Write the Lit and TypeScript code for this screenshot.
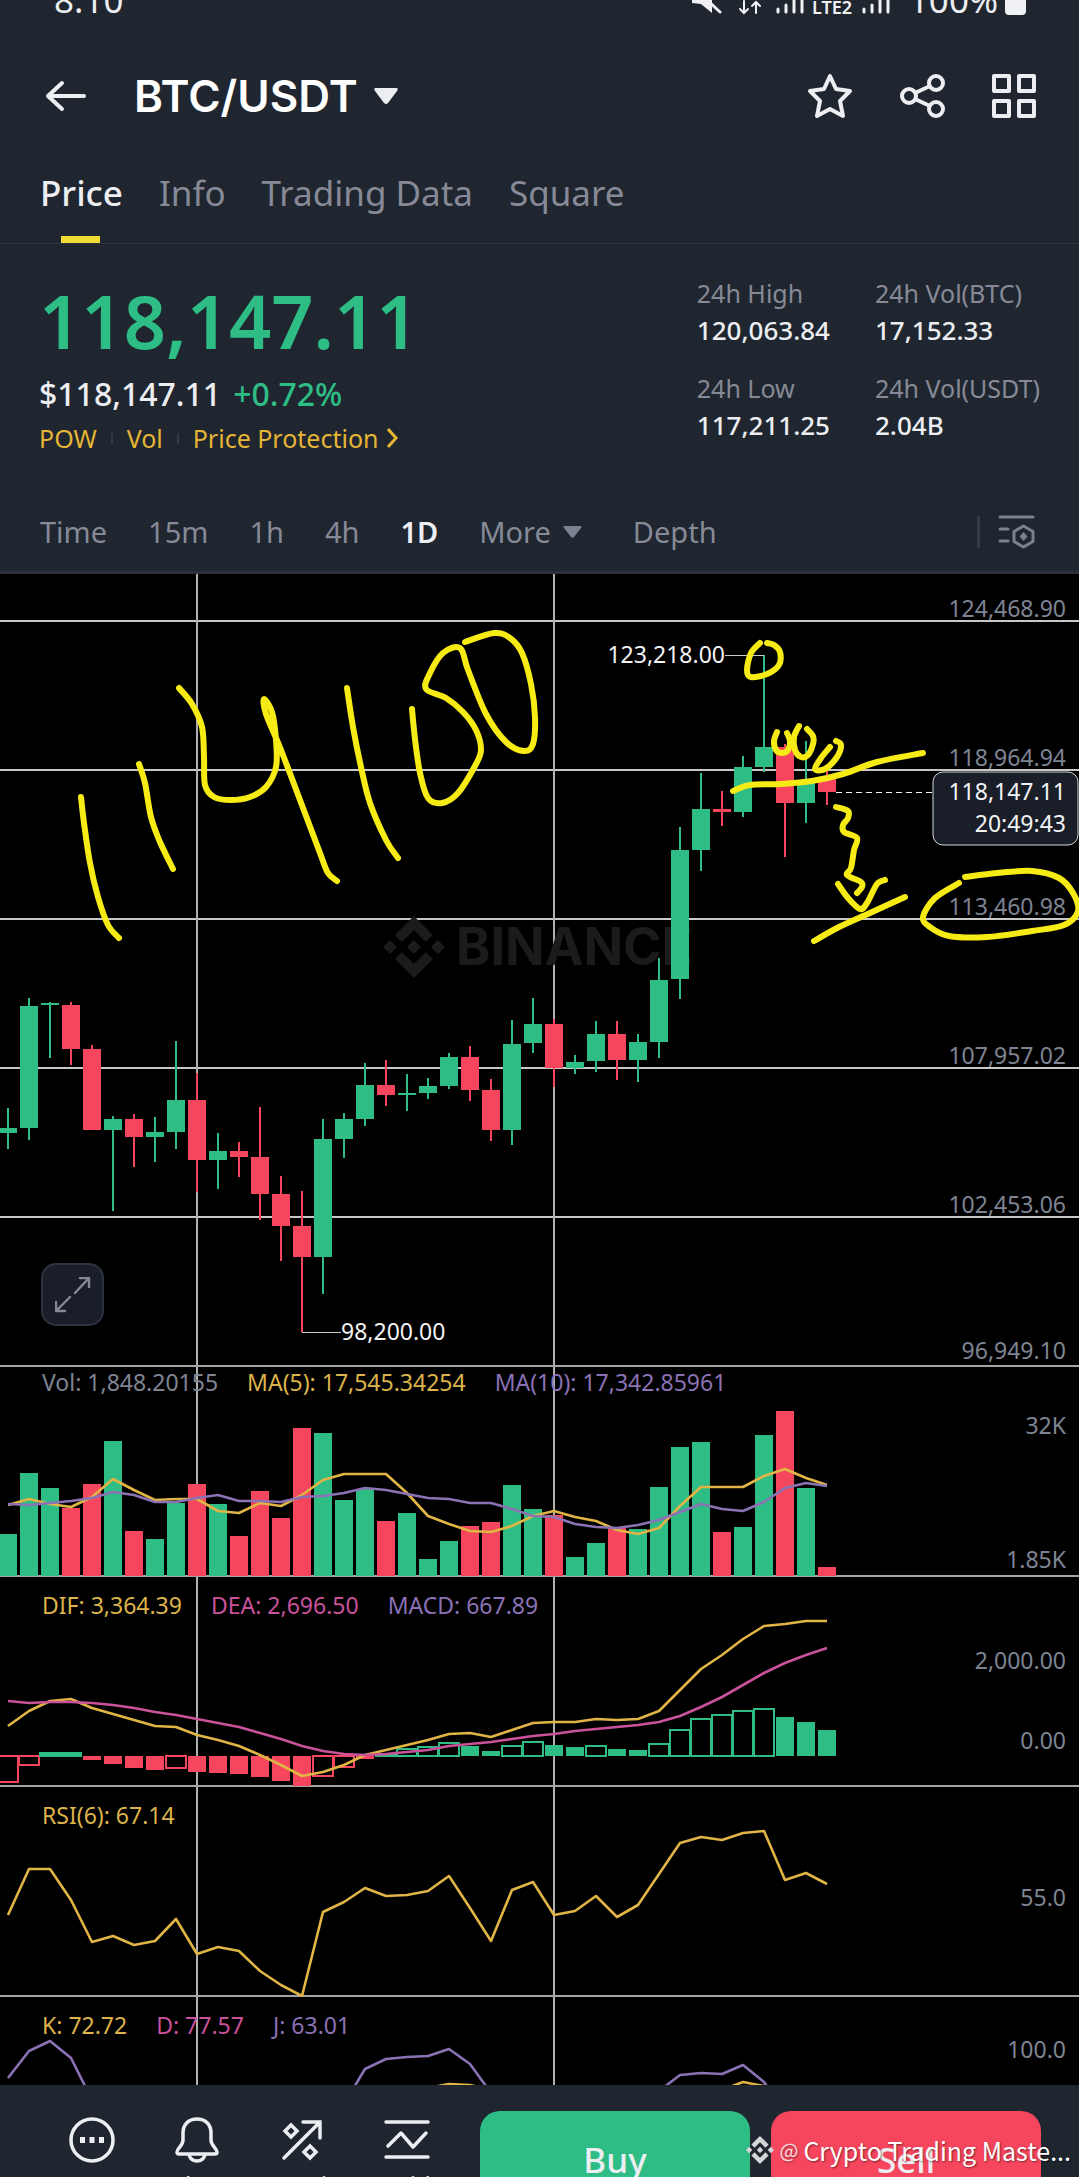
import { LitElement, html, svg, css } from "lit";
import { customElement, state } from "lit/decorators.js";

const GREEN = "#2ebd85";
const RED = "#f6465d";
const WIDTH = 1079;
const STEP = 21;
const FIRST = 8;

const xAt = (i: number) => FIRST + i * STEP;

// [up, high, body top, body bottom, low] in chart units
const CANDLES: [number, number, number, number, number][] = [
  [1, 1108, 1128, 1133, 1149], [1, 998, 1006, 1128, 1140], [1, 1002, 1003, 1005, 1058],
  [0, 1002, 1005, 1049, 1065], [0, 1045, 1049, 1130, 1130], [1, 1116, 1119, 1130, 1211],
  [0, 1114, 1119, 1137, 1167], [1, 1117, 1132, 1137, 1162], [1, 1041, 1100, 1132, 1149],
  [0, 1073, 1100, 1160, 1192], [1, 1133, 1151, 1160, 1189], [0, 1142, 1151, 1157, 1177],
  [0, 1107, 1157, 1194, 1220], [0, 1176, 1194, 1226, 1261], [0, 1191, 1226, 1257, 1332],
  [1, 1119, 1139, 1257, 1294], [1, 1113, 1119, 1139, 1158], [1, 1063, 1085, 1119, 1126],
  [0, 1060, 1085, 1095, 1106], [1, 1074, 1093, 1095, 1111], [1, 1078, 1086, 1093, 1099],
  [1, 1053, 1057, 1086, 1089], [0, 1046, 1057, 1090, 1101], [0, 1079, 1090, 1130, 1141],
  [1, 1020, 1044, 1130, 1145], [1, 998, 1024, 1043, 1053], [0, 1019, 1024, 1068, 1087],
  [1, 1055, 1062, 1068, 1074], [1, 1021, 1034, 1061, 1072], [0, 1021, 1034, 1060, 1080],
  [1, 1034, 1042, 1060, 1082], [1, 958, 980, 1042, 1058], [1, 827, 850, 979, 999],
  [1, 773, 809, 850, 871], [0, 791, 809, 812, 826], [1, 756, 767, 812, 817],
  [1, 655, 747, 767, 772], [0, 744, 747, 803, 857], [1, 741, 780, 803, 823],
  [0, 770, 779, 792, 805],
];

const VOLUME = [
  1534, 1473, 1488, 1508, 1484, 1441, 1531, 1539, 1503, 1484, 1504, 1536, 1491, 1518, 1428, 1433, 1500, 1489, 1521, 1513,
  1559, 1541, 1526, 1522, 1485, 1509, 1515, 1557, 1543, 1528, 1529, 1487, 1447, 1442, 1532, 1527, 1435, 1411, 1488, 1567,
];
const MA5 = [
  1505, 1499, 1504, 1507, 1497, 1479, 1490, 1500, 1499, 1499, 1511, 1513, 1503, 1506, 1495, 1480, 1474, 1474, 1474, 1493,
  1516, 1524, 1531, 1532, 1526, 1516, 1511, 1517, 1521, 1530, 1534, 1528, 1506, 1487, 1487, 1487, 1476, 1469, 1478, 1485,
];
const MA10 = [
  1504, 1505, 1503, 1501, 1498, 1492, 1495, 1502, 1502, 1498, 1495, 1501, 1501, 1502, 1497, 1496, 1493, 1488, 1490, 1494,
  1498, 1499, 1503, 1503, 1509, 1516, 1517, 1524, 1527, 1528, 1525, 1520, 1512, 1504, 1509, 1511, 1502, 1488, 1483, 1486,
];
const DIF = [
  1726, 1711, 1701, 1699, 1708, 1714, 1720, 1726, 1727, 1735, 1740, 1746, 1755, 1765, 1776, 1772, 1765, 1755, 1750, 1745,
  1740, 1734, 1733, 1737, 1730, 1723, 1722, 1722, 1719, 1720, 1719, 1711, 1690, 1669, 1655, 1639, 1626, 1624, 1621, 1621,
];
const DEA = [
  1701, 1703, 1702, 1702, 1703, 1705, 1708, 1712, 1715, 1719, 1723, 1727, 1733, 1739, 1746, 1751, 1754, 1755, 1754, 1752,
  1750, 1746, 1744, 1742, 1739, 1736, 1734, 1731, 1729, 1727, 1725, 1722, 1716, 1707, 1697, 1685, 1673, 1663, 1655, 1648,
];
// [signed height, hollow]
const MACD: [number, number][] = [
  [-26, 1], [-9, 1], [3, 1], [3, 1], [-4, 0], [-8, 0], [-12, 0], [-14, 0], [-12, 1], [-16, 0], [-17, 0], [-18, 0],
  [-21, 0], [-25, 0], [-30, 0], [-20, 1], [-11, 1], [-3, 0], [1, 1], [7, 1], [9, 1], [13, 1], [10, 0], [5, 0],
  [10, 1], [14, 1], [11, 0], [9, 0], [10, 1], [7, 0], [6, 0], [12, 1], [26, 1], [37, 1], [41, 1], [45, 1], [47, 1],
  [39, 0], [34, 0], [26, 0],
];
const RSI = [
  1915, 1869, 1869, 1900, 1942, 1936, 1945, 1941, 1919, 1954, 1947, 1951, 1971, 1985, 1996, 1912, 1902, 1888, 1896, 1895,
  1891, 1876, 1908, 1941, 1890, 1882, 1915, 1911, 1896, 1917, 1905, 1874, 1843, 1837, 1840, 1833, 1831, 1880, 1873, 1884,
];
const KDJ_J: [number, number[]][] = [
  [0, [2078, 2051, 2041, 2058, 2100]],
  [16, [2104, 2069, 2059, 2057, 2056, 2049, 2064, 2093]],
  [31, [2091, 2075, 2073, 2074, 2065, 2082, 2113]],
];
const KDJ_K: [number, number[]][] = [
  [20, [2088, 2084, 2085, 2090]],
  [34, [2090, 2082, 2086]],
];

// Freehand pen strokes as x, y pairs
const STROKES: number[][] = [
  [81, 797, 84, 823, 90, 863, 98, 897, 108, 925, 119, 938],
  [139, 764, 145, 783, 151, 817, 160, 842, 173, 869],
  [179, 688, 192, 704, 202, 727, 204, 757, 205, 785, 214, 797, 231, 800, 250, 797, 266, 787, 276, 767, 276, 740, 272, 712, 264, 699, 266, 714, 281, 750, 300, 800, 320, 853, 328, 873, 337, 881],
  [347, 688, 353, 727, 361, 767, 370, 803, 386, 840, 398, 858],
  [412, 709, 415, 739, 420, 773, 428, 798, 442, 803, 458, 793, 475, 766, 481, 750, 476, 730, 463, 712, 446, 698, 426, 689, 430, 673, 443, 653, 460, 648, 468, 670, 486, 714, 506, 742, 524, 751, 533, 744, 535, 717, 531, 684, 522, 653, 510, 638, 494, 633, 465, 642],
  [760, 643, 751, 653, 747, 670, 751, 677, 767, 674, 779, 665, 780, 652, 774, 645, 767, 643],
  [777, 732, 774, 741, 776, 750, 782, 753, 788, 750, 790, 741, 787, 733],
  [799, 726, 794, 737, 795, 750, 801, 757, 808, 755, 813, 744, 813, 736, 807, 729],
  [830, 747, 821, 758, 815, 769, 825, 769, 837, 757, 841, 745, 836, 741],
  [733, 791, 750, 785, 781, 784, 812, 781, 843, 774, 877, 762, 923, 753],
  [836, 807, 848, 811, 848, 818, 843, 825, 844, 832, 857, 838, 854, 850, 851, 868, 847, 875, 861, 882, 862, 887, 857, 893],
  [838, 884, 848, 898, 860, 909, 867, 903, 877, 884, 885, 880],
  [814, 941, 839, 927, 870, 913, 905, 897],
  [965, 877, 997, 873, 1032, 871, 1059, 878, 1073, 893, 1078, 911, 1064, 925, 1032, 931, 987, 937, 949, 936, 930, 927, 923, 917, 935, 898, 959, 883],
];

// Catmull-Rom spline through the stroke's points
function smooth(s: number[]): string {
  const n = s.length / 2;
  const at = (i: number) => {
    const k = Math.max(0, Math.min(n - 1, i));
    return [s[2 * k], s[2 * k + 1]];
  };
  let d = `M${s[0]} ${s[1]}`;
  for (let i = 0; i < n - 1; i++) {
    const [a, b, c, e] = [at(i - 1), at(i), at(i + 1), at(i + 2)];
    d += `C${b[0] + (c[0] - a[0]) / 6} ${b[1] + (c[1] - a[1]) / 6} ${c[0] - (e[0] - b[0]) / 6} ${c[1] - (e[1] - b[1]) / 6} ${c[0]} ${c[1]}`;
  }
  return d;
}

const LOGO =
  "M16.624 13.9202l2.7175 2.7154-7.353 7.353-7.353-7.352 2.7175-2.7164 4.6355 4.6595 4.6356-4.6595zm4.6366-4.6366L24 12l-2.7154 2.7164L18.5682 12l2.6924-2.7164zm-9.272.001l2.7163 2.6914-2.7164 2.7174v-.001L9.2721 12l2.7164-2.7154zm-9.2722-.001L5.4088 12l-2.6914 2.6924L0 12l2.7164-2.7164zM11.9885.0115l7.353 7.329-2.7174 2.7154-4.6356-4.6356-4.6355 4.6595-2.7174-2.7154 7.353-7.353z";

const line = (cls: string, ys: number[], from = 0) =>
  svg`<polyline class="curve ${cls}" points=${ys.map((y, i) => `${xAt(from + i)},${y}`).join(" ")}></polyline>`;

const columns = (top: number, bottom: number) =>
  [9, 26].map((i) => svg`<line class="grid column" x1=${xAt(i)} x2=${xAt(i)} y1=${top} y2=${bottom}></line>`);

const rule = (y: number) => svg`<line class="grid rule" x1="0" x2=${WIDTH} y1=${y} y2=${y}></line>`;

const axis = (y: number, text: string) => svg`<text class="axis" x="1066" y=${y}>${text}</text>`;

const legend = (y: number, parts: [string, string][]) =>
  svg`<text class="legend" x="42" y=${y}>${parts.map(([cls, t], i) => svg`<tspan class=${cls} dx=${i ? 29 : 0}>${t}</tspan>`)}</text>`;

@customElement("trade-chart")
export class TradeChart extends LitElement {
  static styles = css`
    :host { display: block; background: #000; }
    .pane { position: relative; }
    svg { display: block; width: 100%; height: auto; }
    text { font-family: "Noto Sans", sans-serif; font-size: 23px; }
    .grid { stroke-width: 2; shape-rendering: crispEdges; }
    .level { stroke: #c8c8c8; }
    .column { stroke: #b0b0b0; }
    .rule { stroke: #a4a4a4; }
    .axis { fill: #7f8493; text-anchor: end; }
    .mark { fill: #f2f3f5; }
    .tag { text-anchor: end; fill: #f2f3f5; }
    .end { text-anchor: end; }
    .curve { fill: none; stroke-width: 2.6; stroke-linejoin: round; }
    .curve.yellow { stroke: #e0b545; }
    .curve.pink { stroke: #c9529b; }
    .curve.purple { stroke: #8a72b4; }
    tspan.grey { fill: #7f8493; }
    tspan.yellow { fill: #dcb34a; }
    tspan.pink { fill: #c9529b; }
    tspan.purple { fill: #8a72b4; }
    .pen { fill: none; stroke: #f6eb14; stroke-width: 6; stroke-linecap: round; stroke-linejoin: round; }
    .brand { fill: #1a1b1c; }
    .brand-name { font-family: Inter, sans-serif; font-weight: 700; font-size: 52px; }
    .crisp { shape-rendering: crispEdges; }
    .expand {
      position: absolute; left: 41px; bottom: 41px; width: 63px; height: 63px; padding: 0;
      display: grid; place-items: center; background: #191e28; border: 2px solid #2b3240; border-radius: 15px;
    }
    .expand svg { width: 36px; height: 36px; }
  `;

  private price() {
    return svg`
      ${[621, 770, 919, 1068, 1217].map((y) => svg`<line class="grid level" x1="0" x2=${WIDTH} y1=${y} y2=${y}></line>`)}
      ${columns(574, 1366)}
      ${rule(1366)}
      <g class="brand">
        <path transform="translate(383 916) scale(2.58)" d=${LOGO}></path>
        <text class="brand-name" x="456" y="965">BINANCE</text>
      </g>
      <g class="crisp">
        ${CANDLES.map(([up, high, top, bottom, low], i) => svg`
          <g fill=${up ? GREEN : RED}>
            <rect x=${xAt(i) - 1} y=${high} width="2" height=${low - high}></rect>
            <rect x=${xAt(i) - 9} y=${top} width="18" height=${Math.max(2, bottom - top)}></rect>
          </g>`)}
        <path d="M725 655H764M302 1332H341" stroke="#c8c8c8" stroke-width="1"></path>
        <path d="M836 792H933" stroke="#f2f3f5" stroke-width="1" stroke-dasharray="6 4"></path>
      </g>
      <text class="mark end" x="725" y="663">123,218.00</text>
      <text class="mark" x="341" y="1340">98,200.00</text>
      ${axis(617, "124,468.90")}${axis(766, "118,964.94")}${axis(915, "113,460.98")}
      ${axis(1064, "107,957.02")}${axis(1213, "102,453.06")}${axis(1359, "96,949.10")}
      <rect x="933" y="772" width="145" height="73" rx="10" fill="#191e28" stroke="#d4d6da" stroke-width="1"></rect>
      <text class="tag" x="1066" y="800">118,147.11</text>
      <text class="tag" x="1066" y="832">20:49:43</text>
      ${STROKES.map((s) => svg`<path class="pen" d=${smooth(s)}></path>`)}
    `;
  }

  private volume() {
    return svg`
      ${columns(1366, 1576)}
      ${legend(1391, [["grey", "Vol: 1,848.20155"], ["yellow", "MA(5): 17,545.34254"], ["purple", "MA(10): 17,342.85961"]])}
      ${rule(1576)}
      <g class="crisp">
        ${VOLUME.map((y, i) => svg`<rect x=${xAt(i) - 9} y=${y} width="18" height=${1576 - y} fill=${CANDLES[i][0] ? GREEN : RED}></rect>`)}
      </g>
      ${line("yellow", MA5)}${line("purple", MA10)}
      ${axis(1434, "32K")}${axis(1568, "1.85K")}
    `;
  }

  private macd() {
    return svg`
      ${columns(1576, 1786)}
      ${rule(1786)}
      ${legend(1614, [["yellow", "DIF: 3,364.39"], ["pink", "DEA: 2,696.50"], ["purple", "MACD: 667.89"]])}
      <g class="crisp">
        ${MACD.map(([h, hollow], i) => {
          const color = h > 0 ? GREEN : RED;
          const y = h > 0 ? 1756 - h : 1756;
          return hollow
            ? svg`<rect x=${xAt(i) - 10} y=${y} width="20" height=${Math.abs(h)} fill=${Math.abs(h) < 4 ? color : "#000"} stroke=${color} stroke-width="2"></rect>`
            : svg`<rect x=${xAt(i) - 9} y=${y} width="18" height=${Math.abs(h)} fill=${color}></rect>`;
        })}
      </g>
      ${line("yellow", DIF)}${line("pink", DEA)}
      ${axis(1669, "2,000.00")}${axis(1749, "0.00")}
    `;
  }

  private rsi() {
    return svg`
      ${columns(1786, 1996)}
      ${rule(1996)}
      ${legend(1824, [["yellow", "RSI(6): 67.14"]])}
      ${line("yellow", RSI)}
      ${axis(1906, "55.0")}
    `;
  }

  private kdj() {
    return svg`
      ${columns(1996, 2085)}
      ${legend(2034, [["yellow", "K: 72.72"], ["pink", "D: 77.57"], ["purple", "J: 63.01"]])}
      ${KDJ_K.map(([from, ys]) => line("yellow", ys, from))}
      ${KDJ_J.map(([from, ys]) => line("purple", ys, from))}
      ${axis(2058, "100.0")}
    `;
  }

  render() {
    return html`
      <div class="pane">
        <svg viewBox="0 574 1079 793" role="img" aria-label="Price">${this.price()}</svg>
        <button class="expand" aria-label="Full screen">
          <svg viewBox="0 0 36 36" fill="none" stroke="#858994" stroke-width="2.4" stroke-linecap="round" stroke-linejoin="round">
            <path d="M20 16L34 1M25 1H34V10M15 20L1 34M1 25V34H10"></path>
          </svg>
        </button>
      </div>
      <div class="pane"><svg viewBox="0 1367 1079 210" role="img" aria-label="Volume">${this.volume()}</svg></div>
      <div class="pane"><svg viewBox="0 1577 1079 210" role="img" aria-label="MACD">${this.macd()}</svg></div>
      <div class="pane"><svg viewBox="0 1787 1079 210" role="img" aria-label="RSI">${this.rsi()}</svg></div>
      <div class="pane"><svg viewBox="0 1997 1079 88" role="img" aria-label="KDJ">${this.kdj()}</svg></div>
    `;
  }
}

@customElement("app-root")
export class AppRoot extends LitElement {
  static styles = css`
    :host {
      display: flex; flex-direction: column; position: relative; height: 100vh; overflow: hidden;
      background: #1f2630; color: #eceef2; font-family: "Noto Sans", sans-serif;
    }
    button { font: inherit; color: inherit; background: none; border: 0; padding: 0; margin: 0; }
    a { color: inherit; text-decoration: none; }
    svg { display: block; flex: none; }
    header, main, footer, nav, section { flex: none; }

    .status { display: flex; flex: none; align-items: flex-end; justify-content: space-between; height: 21px; padding: 0 52px 0 54px; overflow: hidden; }
    .clock { font-size: 35px; line-height: 42px; }
    .radio { display: flex; align-items: flex-end; }
    .battery { font-size: 35px; line-height: 42px; }

    .bar { display: flex; align-items: center; height: 150px; padding: 0 42px 0 45px; box-sizing: border-box; }
    .pair { display: flex; align-items: center; gap: 16px; margin: 0 auto 0 48px; font-family: Inter, sans-serif; font-size: 44px; line-height: 50px; font-weight: 600; color: #fff; }
    .pair h1 { margin: 0; font: inherit; }
    .actions { display: flex; gap: 46px; }

    .tabs { display: flex; gap: 36px; padding: 0 40px; border-bottom: 1px solid #2d3440; font-size: 35px; line-height: 44px; color: #878a96; }
    .tab { position: relative; padding-bottom: 28px; }
    .tab.active { color: #eceef2; font-weight: 500; }
    .tab.active::after { content: ""; position: absolute; left: 50%; bottom: 0; width: 39px; height: 7px; margin-left: -20px; background: #f0dc35; }

    .ticker { display: flex; justify-content: space-between; padding: 33px 39px 40px; }
    .quote { padding-top: 4px; }
    .last { font-size: 74px; line-height: 80px; font-weight: 600; color: #2ebd85; }
    .fiat { display: flex; gap: 12px; margin-top: 15px; font-size: 32px; line-height: 36px; font-weight: 500; }
    .change { color: #2ebd85; }
    .labels { display: flex; align-items: center; gap: 14px; margin-top: 11px; font-size: 25px; line-height: 30px; color: #e5b534; }
    .labels i { width: 2px; height: 11px; background: #353c48; }
    .protect { display: flex; align-items: center; gap: 8px; }
    .stats { display: flex; gap: 45px; margin: 0; font-size: 25px; line-height: 32px; }
    .stats div + div { margin-top: 26px; }
    dl { margin: 0; }
    dt { color: #878a96; }
    dd { margin: 5px 0 0; font-size: 26px; font-weight: 500; }

    .intervals { display: flex; align-items: center; gap: 41px; height: 78px; padding: 0 44px 0 40px; border-bottom: 3px solid #2a2f3b; font-size: 29px; line-height: 36px; color: #878a96; }
    .intervals .active { color: #eceef2; font-weight: 600; }
    .more { display: flex; align-items: center; gap: 12px; margin-right: 10px; }
    .settings { display: flex; align-items: center; gap: 18px; margin-left: auto; }
    .settings i { width: 3px; height: 32px; background: #353c48; }

    footer { display: flex; align-items: flex-start; padding: 26px 38px 26px 39px; gap: 21px; }
    .tools { display: flex; }
    .tool { display: flex; flex-direction: column; align-items: center; width: 105px; padding-top: 6px; font-size: 24px; line-height: 32px; gap: 6px; }
    .trade { display: flex; flex: 1; gap: 21px; }
    .order { flex: 1; height: 98px; border-radius: 20px; font-size: 35px; line-height: 44px; font-weight: 500; }
    .buy { background: #2ebd85; }
    .sell { background: #f6465d; }

    .credit {
      position: absolute; right: 8px; bottom: 9px; display: flex; align-items: center; gap: 5px;
      font-family: "Noto Sans CJK SC", sans-serif; font-size: 25px; line-height: 36px; color: #fff;
      text-shadow: 1px 1px 2px rgba(0, 0, 0, 0.5);
    }
    .credit .at { font-size: 20px; opacity: 0.8; }
  `;

  @state() private tab = "Price";
  @state() private interval = "1D";

  private stat(name: string, value: string) {
    return html`<div><dt>${name}</dt><dd>${value}</dd></div>`;
  }

  private intervalButton(name: string) {
    return html`<button class=${this.interval === name ? "active" : ""} @click=${() => (this.interval = name)}>${name}</button>`;
  }

  render() {
    return html`
      <div class="status">
        <span class="clock">8:10</span>
        <div class="radio">
          <svg width="222" height="21" viewBox="0 0 222 21" fill="none" stroke="#f0f1f4" stroke-width="3" stroke-linecap="round">
            <path d="M5 0L5 3L14 4L25 13V0Z" fill="#f0f1f4" stroke="none"></path>
            <path d="M20 0L33 12"></path>
            <path d="M57 1V13M53 9L57 13L61 9M69 13V2M65 6L69 2L73 6" stroke-width="2"></path>
            <path d="M91 9V12M99 5V12M107 0V12M115 0V12M177 9V12M185 5V12M193 0V12M201 0V12"></path>
            <text x="125" y="14" font-size="18" font-weight="600" fill="#f0f1f4" stroke="none">LTE2</text>
          </svg>
          <span class="battery">100%</span>
          <svg width="29" height="21" viewBox="0 0 29 21"><path d="M7 0H28V11Q28 15 24 15H11Q7 15 7 11Z" fill="#f0f1f4"></path></svg>
        </div>
      </div>

      <header class="bar">
        <button aria-label="Back">
          <svg width="41" height="32" viewBox="0 0 41 32" fill="none" stroke="#eceef2" stroke-width="4" stroke-linecap="round" stroke-linejoin="round"><path d="M39 16H3M17 3L3 16L17 29"></path></svg>
        </button>
        <button class="pair">
          <h1>BTC/USDT</h1>
          <svg width="24" height="16" viewBox="0 0 24 16"><path d="M2 0H22Q25 0 23 3L14 15Q12 17 10 15L1 3Q-1 0 2 0Z" fill="#eceef2"></path></svg>
        </button>
        <div class="actions">
          <button aria-label="Favourite">
            <svg width="46" height="46" viewBox="0 0 46 46" fill="none" stroke="#eceef2" stroke-width="4" stroke-linejoin="round">
              <path d="M23 3L29 16L43 18L33 28L36 43L23 36L10 43L13 28L3 18L17 16Z"></path>
            </svg>
          </button>
          <button aria-label="Share">
            <svg width="46" height="46" viewBox="0 0 46 46" fill="none" stroke="#eceef2" stroke-width="4">
              <circle cx="10" cy="23" r="7"></circle><circle cx="37" cy="10" r="7"></circle><circle cx="37" cy="36" r="7"></circle>
              <path d="M16 20L31 13M16 26L31 33"></path>
            </svg>
          </button>
          <button aria-label="Layout">
            <svg width="46" height="46" viewBox="0 0 46 46" fill="none" stroke="#eceef2" stroke-width="4" stroke-linejoin="round">
              <path d="M3 3H18V18H3ZM28 3H43V18H28ZM3 28H18V43H3ZM28 28H43V43H28Z"></path>
            </svg>
          </button>
        </div>
      </header>

      <nav class="tabs">
        ${["Price", "Info", "Trading Data", "Square"].map(
          (t) => html`<button class="tab ${this.tab === t ? "active" : ""}" @click=${() => (this.tab = t)}>${t}</button>`
        )}
      </nav>

      <section class="ticker">
        <div class="quote">
          <div class="last">118,147.11</div>
          <div class="fiat"><span>$118,147.11</span><span class="change">+0.72%</span></div>
          <div class="labels">
            <a href="#pow">POW</a><i></i><a href="#vol">Vol</a><i></i>
            <a class="protect" href="#protection">Price Protection
              <svg width="11" height="20" viewBox="0 0 11 20" fill="none" stroke="#e5b534" stroke-width="3"><path d="M1 1L9 10L1 19"></path></svg>
            </a>
          </div>
        </div>
        <div class="stats">
          <dl>${this.stat("24h High", "120,063.84")}${this.stat("24h Low", "117,211.25")}</dl>
          <dl>${this.stat("24h Vol(BTC)", "17,152.33")}${this.stat("24h Vol(USDT)", "2.04B")}</dl>
        </div>
      </section>

      <nav class="intervals">
        ${["Time", "15m", "1h", "4h", "1D"].map((n) => this.intervalButton(n))}
        <button class="more">More
          <svg width="19" height="12" viewBox="0 0 19 12"><path d="M1 0H18Q19 1 18 2L11 11Q9.5 12.5 8 11L1 2Q0 1 1 0Z" fill="#7b818e"></path></svg>
        </button>
        ${this.intervalButton("Depth")}
        <div class="settings">
          <i></i>
          <button aria-label="Chart settings">
            <svg width="37" height="34" viewBox="0 0 37 34" fill="none" stroke="#7b808c" stroke-width="3" stroke-linecap="round">
              <path d="M2 2H35M2 14H10M2 26H10"></path>
              <path d="M25.5 11L35 16.5V26.5L25.5 32L16 26.5V16.5Z" stroke-linejoin="round"></path>
              <path d="M25.5 17L29.5 21.5L25.5 26L21.5 21.5Z" fill="#7b808c" stroke="none"></path>
            </svg>
          </button>
        </div>
      </nav>

      <main><trade-chart></trade-chart></main>

      <footer>
        <nav class="tools">
          <button class="tool">
            <svg width="46" height="46" viewBox="0 0 46 46" fill="none" stroke="#eceef2" stroke-width="3.5">
              <circle cx="23" cy="23" r="21"></circle>
              <path d="M11 20H16V26H11ZM20.5 20H25.5V26H20.5ZM30 20H35V26H30Z" fill="#eceef2" stroke="none"></path>
            </svg>More
          </button>
          <button class="tool">
            <svg width="46" height="46" viewBox="0 0 46 46" fill="none" stroke="#eceef2" stroke-width="3.5" stroke-linejoin="round">
              <path d="M23 2C14 2 9 8 9 16V23C9 29 3 31 3 35Q3 37 5 37H41Q43 37 43 35C43 31 37 29 37 23V16C37 8 32 2 23 2Z"></path>
              <path d="M15 38Q17 44 23 44Q29 44 31 38"></path>
            </svg>Alert
          </button>
          <button class="tool">
            <svg width="46" height="46" viewBox="0 0 46 46" fill="none" stroke="#eceef2" stroke-width="3.5" stroke-linecap="round">
              <path d="M5 41L41 5M24 5H41V21"></path>
              <path d="M12 8L18 14L12 20L6 14ZM31 29L37 35L31 41L25 35Z"></path>
            </svg>Margin
          </button>
          <button class="tool">
            <svg width="46" height="46" viewBox="0 0 46 46" fill="none" stroke="#eceef2" stroke-width="3.5" stroke-linecap="round" stroke-linejoin="round">
              <path d="M2 5H44M2 40H44M4 29L17 16L29 30L42 16"></path>
            </svg>Grid
          </button>
        </nav>
        <div class="trade">
          <button class="order buy">Buy</button>
          <button class="order sell">Sell</button>
        </div>
      </footer>

      <div class="credit">
        <svg width="28" height="28" viewBox="0 0 24 24" fill="#d5d6d8"><path d=${LOGO}></path></svg>
        <span class="at">@</span><span>Crypto Trading Maste...</span>
      </div>
    `;
  }
}
